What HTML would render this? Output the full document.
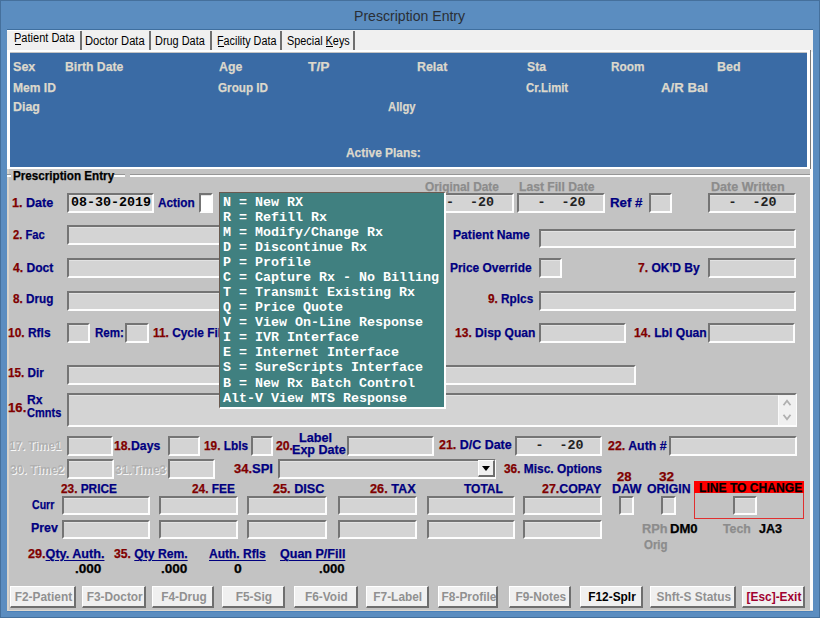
<!DOCTYPE html>
<html><head><meta charset="utf-8"><title>Prescription Entry</title><style>
html,body{margin:0;padding:0;}
body{width:820px;height:618px;overflow:hidden;position:relative;background:#5b8dc0;font-family:"Liberation Sans",sans-serif;}
.t{position:absolute;white-space:pre;line-height:1;transform-origin:0 0;}
.t.b{-webkit-text-stroke:0.25px currentColor;}
.m{position:absolute;white-space:pre;line-height:1;font-family:"Liberation Mono",monospace;font-weight:bold;}
.bx{position:absolute;border:2px solid;border-color:#747474 #fdfdfd #fdfdfd #747474;box-shadow:inset 0 1px 0 #e2e2e2;}
.r{position:absolute;}
.btn{position:absolute;box-sizing:border-box;background:#f0f0f0;border-style:solid;border-width:1px 2px 2px 1px;border-color:#fff #6e6e6e #6e6e6e #fff;font:bold 13px "Liberation Sans",sans-serif;text-align:center;line-height:18px;padding-top:1px;padding-left:2px;white-space:nowrap;overflow:hidden;}
.btn span{display:inline-block;margin:0 -20px;transform:scaleX(0.914);}
</style></head><body>

<div class="r" style="left:0;top:0;width:818px;height:616px;border:1px solid #45709c;"></div>
<div class="r" style="left:7px;top:29px;width:806px;height:582px;background:#c3c3c3;"></div>
<div class="r" style="left:810px;top:29px;width:3px;height:582px;background:#fbfbfb;"></div>
<div class="r" style="left:7px;top:610px;width:806px;height:1px;background:#ddd8d0;"></div>
<div class="r" style="left:7px;top:611px;width:806px;height:1px;background:#4a80b8;"></div>
<div class="r" style="left:7px;top:169px;width:2px;height:442px;background:#d8d4cc;"></div>
<div class="r" style="left:7px;top:29px;width:806px;height:23px;background:#f0f0f0;"></div>
<div class="r" style="left:7px;top:29px;width:806px;height:1px;background:#3f6f9f;"></div>
<div class="r" style="left:7px;top:50px;width:803px;height:2px;background:#fff;"></div>
<div class="r" style="left:7px;top:50px;width:3px;height:119px;background:#fff;"></div>
<div class="r" style="left:7px;top:167px;width:803px;height:2px;background:#fff;"></div>
<div class="r" style="left:807px;top:50px;width:3px;height:119px;background:#fff;"></div>
<div class="r" style="left:810px;top:50px;width:1px;height:119px;background:#7a7a7a;"></div>
<div class="r" style="left:10px;top:53px;width:797px;height:114px;background:#3a6ba5;"></div>
<div class="r" style="left:80px;top:31px;width:2px;height:19px;background:#6f6f6f;"></div>
<div class="r" style="left:148.5px;top:31px;width:2px;height:19px;background:#6f6f6f;"></div>
<div class="r" style="left:209.5px;top:31px;width:2px;height:19px;background:#6f6f6f;"></div>
<div class="r" style="left:280px;top:31px;width:2px;height:19px;background:#6f6f6f;"></div>
<div class="r" style="left:353px;top:31px;width:2px;height:19px;background:#6f6f6f;"></div>
<div class="r" style="left:7px;top:30px;width:74px;height:1px;background:#fff;"></div>
<div class="r" style="left:15px;top:44px;width:6px;height:1px;background:#000;"></div>
<div class="r" style="left:218px;top:46px;width:6px;height:1px;background:#000;"></div>
<div class="r" style="left:326px;top:46px;width:7px;height:1px;background:#000;"></div>
<div class="r" style="left:7px;top:174px;width:803px;height:1px;background:#969696;"></div>
<div class="r" style="left:7px;top:175px;width:803px;height:2px;background:#fdfdfd;"></div>
<div class="r" style="left:11px;top:170px;width:103px;height:12px;background:#c3c3c3;"></div>
<div class="r" style="left:125px;top:173px;width:5px;height:4px;background:#c3c3c3;"></div>
<div class="bx" style="left:67px;top:193px;width:83px;height:16px;background:#dadada;"></div>
<div class="m" style="left:71.0px;top:196.08px;font-size:13.33px;color:#000">08-30-2019</div>
<div class="bx" style="left:199px;top:193px;width:10px;height:16px;background:#fff;"></div>
<div class="bx" style="left:426px;top:193px;width:84px;height:16px;background:#d4d4d4;"></div>
<div class="m" style="left:430.0px;top:196.08px;font-size:13.33px;color:#222">  -  -20</div>
<div class="bx" style="left:517px;top:193px;width:84px;height:16px;background:#d4d4d4;"></div>
<div class="m" style="left:521.5px;top:196.08px;font-size:13.33px;color:#222">  -  -20</div>
<div class="bx" style="left:649px;top:193px;width:19px;height:16px;background:#d4d4d4;"></div>
<div class="bx" style="left:708px;top:193px;width:84px;height:16px;background:#d4d4d4;"></div>
<div class="m" style="left:712.5px;top:196.08px;font-size:13.33px;color:#222">  -  -20</div>
<div class="bx" style="left:67px;top:225px;width:369px;height:16px;background:#d4d4d4;"></div>
<div class="bx" style="left:539px;top:229px;width:253px;height:15px;background:#d4d4d4;"></div>
<div class="bx" style="left:67px;top:258px;width:369px;height:16px;background:#d4d4d4;"></div>
<div class="bx" style="left:539px;top:258px;width:19px;height:16px;background:#d4d4d4;"></div>
<div class="bx" style="left:708px;top:258px;width:84px;height:16px;background:#d4d4d4;"></div>
<div class="bx" style="left:67px;top:291px;width:369px;height:16px;background:#d4d4d4;"></div>
<div class="bx" style="left:539px;top:291px;width:253px;height:16px;background:#d4d4d4;"></div>
<div class="bx" style="left:67px;top:323px;width:19px;height:16px;background:#d4d4d4;"></div>
<div class="bx" style="left:125px;top:323px;width:20px;height:16px;background:#d4d4d4;"></div>
<div class="bx" style="left:539px;top:323px;width:83px;height:16px;background:#d4d4d4;"></div>
<div class="bx" style="left:708px;top:323px;width:83px;height:16px;background:#d4d4d4;"></div>
<div class="bx" style="left:67px;top:365px;width:565px;height:16px;background:#d4d4d4;"></div>
<div class="bx" style="left:67px;top:393px;width:726px;height:30px;background:#d4d4d4;"></div>
<div class="r" style="left:778px;top:395px;width:18px;height:30px;background:#f0f0f0;border-left:1px solid #fafafa;box-sizing:border-box;"></div>
<svg class="r" style="left:778px;top:395px" width="17" height="29"><path d="M5.5 10.3 L9 5.7 L12.5 10.3 M5.5 19.7 L9 24.3 L12.5 19.7" stroke="#b0b0b0" stroke-width="1.8" fill="none"/></svg>
<div class="bx" style="left:67px;top:436px;width:42px;height:16px;background:#d4d4d4;"></div>
<div class="bx" style="left:168px;top:436px;width:28px;height:16px;background:#d4d4d4;"></div>
<div class="bx" style="left:251px;top:436px;width:18px;height:16px;background:#d4d4d4;"></div>
<div class="bx" style="left:347px;top:436px;width:83px;height:16px;background:#d4d4d4;"></div>
<div class="bx" style="left:515px;top:436px;width:83px;height:16px;background:#d4d4d4;"></div>
<div class="m" style="left:519.5px;top:439.28px;font-size:13.33px;color:#222">  -  -20</div>
<div class="bx" style="left:669px;top:436px;width:124px;height:16px;background:#d4d4d4;"></div>
<div class="bx" style="left:67px;top:459px;width:43px;height:16px;background:#d4d4d4;"></div>
<div class="bx" style="left:168px;top:459px;width:43px;height:16px;background:#d4d4d4;"></div>
<div class="bx" style="left:278px;top:459px;width:214px;height:16px;background:#d4d4d4;"></div>
<div class="r" style="left:478px;top:460px;width:17px;height:17px;box-sizing:border-box;background:#f0f0f0;border-style:solid;border-width:1px 2px 2px 1px;border-color:#fff #6e6e6e #6e6e6e #fff;"></div>
<svg class="r" style="left:478px;top:460px" width="17" height="17"><path d="M4 6 L12 6 L8 11 Z" fill="#000"/></svg>
<div class="r" style="left:694px;top:481px;width:108px;height:36px;border:1px solid #e03030;"></div>
<div class="r" style="left:694px;top:481px;width:110px;height:12px;background:#ff0000;"></div>
<div class="bx" style="left:62px;top:496px;width:84px;height:15px;background:#d4d4d4;"></div>
<div class="bx" style="left:62px;top:520px;width:84px;height:15px;background:#d4d4d4;"></div>
<div class="bx" style="left:159px;top:496px;width:75px;height:15px;background:#d4d4d4;"></div>
<div class="bx" style="left:159px;top:520px;width:75px;height:15px;background:#d4d4d4;"></div>
<div class="bx" style="left:247px;top:496px;width:76px;height:15px;background:#d4d4d4;"></div>
<div class="bx" style="left:247px;top:520px;width:76px;height:15px;background:#d4d4d4;"></div>
<div class="bx" style="left:338px;top:496px;width:75px;height:15px;background:#d4d4d4;"></div>
<div class="bx" style="left:338px;top:520px;width:75px;height:15px;background:#d4d4d4;"></div>
<div class="bx" style="left:427px;top:496px;width:84px;height:15px;background:#d4d4d4;"></div>
<div class="bx" style="left:427px;top:520px;width:84px;height:15px;background:#d4d4d4;"></div>
<div class="bx" style="left:523px;top:496px;width:75px;height:15px;background:#d4d4d4;"></div>
<div class="bx" style="left:523px;top:520px;width:75px;height:15px;background:#d4d4d4;"></div>
<div class="bx" style="left:619px;top:496px;width:11px;height:15px;background:#d4d4d4;"></div>
<div class="bx" style="left:661px;top:496px;width:11px;height:15px;background:#d4d4d4;"></div>
<div class="bx" style="left:733px;top:496px;width:20px;height:15px;background:#d4d4d4;"></div>
<div class="t" style="left:353.86px;top:7.90px;font-size:15px;font-weight:normal;transform:scaleX(0.9385);"><span style="color:#2a2f36;">Prescription Entry</span></div>
<div class="t" style="left:13.58px;top:31.84px;font-size:12px;font-weight:normal;transform:scaleX(0.9192);"><span style="color:#000;">Patient Data</span></div>
<div class="t" style="left:84.82px;top:34.84px;font-size:12px;font-weight:normal;transform:scaleX(0.9325);"><span style="color:#000;">Doctor Data</span></div>
<div class="t" style="left:155.39px;top:34.84px;font-size:12px;font-weight:normal;transform:scaleX(0.9093);"><span style="color:#000;">Drug Data</span></div>
<div class="t" style="left:216.50px;top:34.84px;font-size:12px;font-weight:normal;transform:scaleX(0.9000);"><span style="color:#000;">Facility Data</span></div>
<div class="t" style="left:287.10px;top:34.84px;font-size:12px;font-weight:normal;transform:scaleX(0.9044);"><span style="color:#000;">Special Keys</span></div>
<div class="t b" style="left:12.78px;top:59.79px;font-size:13px;font-weight:bold;transform:scaleX(0.9659);"><span style="color:#dcd8cc;">Sex</span></div>
<div class="t b" style="left:64.81px;top:59.79px;font-size:13px;font-weight:bold;transform:scaleX(0.9385);"><span style="color:#dcd8cc;">Birth Date</span></div>
<div class="t b" style="left:219.25px;top:59.79px;font-size:13px;font-weight:bold;transform:scaleX(0.9479);"><span style="color:#dcd8cc;">Age</span></div>
<div class="t b" style="left:308.00px;top:59.79px;font-size:13px;font-weight:bold;transform:scaleX(1.0625);"><span style="color:#dcd8cc;">T/P</span></div>
<div class="t b" style="left:417.05px;top:59.79px;font-size:13px;font-weight:bold;transform:scaleX(0.9516);"><span style="color:#dcd8cc;">Relat</span></div>
<div class="t b" style="left:526.56px;top:59.79px;font-size:13px;font-weight:bold;transform:scaleX(0.9375);"><span style="color:#dcd8cc;">Sta</span></div>
<div class="t b" style="left:611.09px;top:59.79px;font-size:13px;font-weight:bold;transform:scaleX(0.9071);"><span style="color:#dcd8cc;">Room</span></div>
<div class="t b" style="left:716.54px;top:59.79px;font-size:13px;font-weight:bold;transform:scaleX(0.9565);"><span style="color:#dcd8cc;">Bed</span></div>
<div class="t b" style="left:12.82px;top:80.79px;font-size:13px;font-weight:bold;transform:scaleX(0.9278);"><span style="color:#dcd8cc;">Mem ID</span></div>
<div class="t b" style="left:218.00px;top:80.79px;font-size:13px;font-weight:bold;transform:scaleX(0.9000);"><span style="color:#dcd8cc;">Group ID</span></div>
<div class="t b" style="left:526.25px;top:80.79px;font-size:13px;font-weight:bold;transform:scaleX(0.8698);"><span style="color:#dcd8cc;">Cr.Limit</span></div>
<div class="t b" style="left:660.50px;top:80.79px;font-size:13px;font-weight:bold;transform:scaleX(1.0167);"><span style="color:#dcd8cc;">A/R Bal</span></div>
<div class="t b" style="left:12.80px;top:99.99px;font-size:13px;font-weight:bold;transform:scaleX(0.9537);"><span style="color:#dcd8cc;">Diag</span></div>
<div class="t b" style="left:388.00px;top:99.99px;font-size:13px;font-weight:bold;transform:scaleX(0.8672);"><span style="color:#dcd8cc;">Allgy</span></div>
<div class="t b" style="left:346.25px;top:146.49px;font-size:13px;font-weight:bold;transform:scaleX(0.9167);"><span style="color:#dcd8cc;">Active Plans:</span></div>
<div class="t b" style="left:12.90px;top:169.39px;font-size:13px;font-weight:bold;transform:scaleX(0.8973);"><span style="color:#000;">Prescription Entry</span></div>
<div class="t b" style="left:12.03px;top:195.69px;font-size:13px;font-weight:bold;transform:scaleX(0.9683);"><span style="color:#800000;">1. </span><span style="color:#000080;">Date</span></div>
<div class="t b" style="left:158.00px;top:195.69px;font-size:13px;font-weight:bold;transform:scaleX(0.9075);"><span style="color:#000080;">Action</span></div>
<div class="t b" style="left:425.00px;top:179.69px;font-size:13px;font-weight:bold;transform:scaleX(0.9136);"><span style="color:#8c8c8c;">Original Date</span></div>
<div class="t b" style="left:518.77px;top:179.69px;font-size:13px;font-weight:bold;transform:scaleX(0.9337);"><span style="color:#8c8c8c;">Last Fill Date</span></div>
<div class="t b" style="left:610.18px;top:195.69px;font-size:13px;font-weight:bold;transform:scaleX(1.0226);"><span style="color:#000080;">Ref #</span></div>
<div class="t b" style="left:711.43px;top:179.69px;font-size:13px;font-weight:bold;transform:scaleX(0.9667);"><span style="color:#8c8c8c;">Date Written</span></div>
<div class="t b" style="left:13.00px;top:227.99px;font-size:13px;font-weight:bold;transform:scaleX(0.8611);"><span style="color:#800000;">2. </span><span style="color:#000080;">Fac</span></div>
<div class="t b" style="left:453.47px;top:227.99px;font-size:13px;font-weight:bold;transform:scaleX(0.9333);"><span style="color:#000080;">Patient Name</span></div>
<div class="t b" style="left:13.00px;top:260.99px;font-size:13px;font-weight:bold;transform:scaleX(0.9302);"><span style="color:#800000;">4. </span><span style="color:#000080;">Doct</span></div>
<div class="t b" style="left:450.48px;top:260.99px;font-size:13px;font-weight:bold;transform:scaleX(0.9182);"><span style="color:#000080;">Price Override</span></div>
<div class="t b" style="left:638.30px;top:260.99px;font-size:13px;font-weight:bold;transform:scaleX(0.9254);"><span style="color:#800000;">7. </span><span style="color:#000080;">OK&#x27;D By</span></div>
<div class="t b" style="left:13.00px;top:292.49px;font-size:13px;font-weight:bold;transform:scaleX(0.9023);"><span style="color:#800000;">8. </span><span style="color:#000080;">Drug</span></div>
<div class="t b" style="left:487.80px;top:292.49px;font-size:13px;font-weight:bold;transform:scaleX(0.9061);"><span style="color:#800000;">9. </span><span style="color:#000080;">Rplcs</span></div>
<div class="t b" style="left:7.88px;top:325.99px;font-size:13px;font-weight:bold;transform:scaleX(0.9200);"><span style="color:#800000;">10. </span><span style="color:#000080;">Rfls</span></div>
<div class="t b" style="left:94.51px;top:325.99px;font-size:13px;font-weight:bold;transform:scaleX(0.8903);"><span style="color:#000080;">Rem:</span></div>
<div class="t b" style="left:152.69px;top:325.99px;font-size:13px;font-weight:bold;transform:scaleX(0.9140);"><span style="color:#800000;">11. </span><span style="color:#000080;">Cycle Fill</span></div>
<div class="t b" style="left:455.32px;top:325.99px;font-size:13px;font-weight:bold;transform:scaleX(0.9265);"><span style="color:#800000;">13. </span><span style="color:#000080;">Disp Quan</span></div>
<div class="t b" style="left:634.47px;top:325.99px;font-size:13px;font-weight:bold;transform:scaleX(0.9316);"><span style="color:#800000;">14. </span><span style="color:#000080;">Lbl Quan</span></div>
<div class="t b" style="left:7.90px;top:365.99px;font-size:13px;font-weight:bold;transform:scaleX(0.9026);"><span style="color:#800000;">15. </span><span style="color:#000080;">Dir</span></div>
<div class="t b" style="left:7.99px;top:400.59px;font-size:13px;font-weight:bold;transform:scaleX(1.0125);"><span style="color:#800000;">16.</span></div>
<div class="t b" style="left:26.87px;top:392.99px;font-size:13px;font-weight:bold;transform:scaleX(0.9313);"><span style="color:#000080;">Rx</span></div>
<div class="t b" style="left:26.90px;top:406.39px;font-size:13px;font-weight:bold;transform:scaleX(0.8475);"><span style="color:#000080;">Cmnts</span></div>
<div class="t b" style="left:9.11px;top:439.49px;font-size:13px;font-weight:bold;transform:scaleX(0.8879);text-shadow:1px 1px 0 #f8f8f8;-webkit-text-stroke:0;"><span style="color:#b0b0b0;">17. Time1</span></div>
<div class="t b" style="left:114.46px;top:439.49px;font-size:13px;font-weight:bold;transform:scaleX(0.9417);"><span style="color:#800000;">18.</span><span style="color:#000080;">Days</span></div>
<div class="t b" style="left:203.79px;top:439.49px;font-size:13px;font-weight:bold;transform:scaleX(0.9085);"><span style="color:#800000;">19. </span><span style="color:#000080;">Lbls</span></div>
<div class="t b" style="left:276.00px;top:438.99px;font-size:13px;font-weight:bold;transform:scaleX(0.9412);"><span style="color:#800000;">20.</span></div>
<div class="t b" style="left:299.02px;top:430.69px;font-size:13px;font-weight:bold;transform:scaleX(0.9750);"><span style="color:#000080;">Label</span></div>
<div class="t b" style="left:292.03px;top:442.79px;font-size:13px;font-weight:bold;transform:scaleX(0.9667);"><span style="color:#000080;">Exp Date</span></div>
<div class="t b" style="left:438.90px;top:438.29px;font-size:13px;font-weight:bold;transform:scaleX(0.9579);"><span style="color:#800000;">21. </span><span style="color:#000080;">D/C Date</span></div>
<div class="t b" style="left:607.90px;top:438.89px;font-size:13px;font-weight:bold;transform:scaleX(0.9516);"><span style="color:#800000;">22. </span><span style="color:#000080;">Auth #</span></div>
<div class="t b" style="left:9.58px;top:462.74px;font-size:13px;font-weight:bold;transform:scaleX(0.9181);text-shadow:1px 1px 0 #f8f8f8;-webkit-text-stroke:0;"><span style="color:#b0b0b0;">30. Time2</span></div>
<div class="t b" style="left:114.57px;top:462.74px;font-size:13px;font-weight:bold;transform:scaleX(0.9259);text-shadow:1px 1px 0 #f8f8f8;-webkit-text-stroke:0;"><span style="color:#b0b0b0;">31.Time3</span></div>
<div class="t b" style="left:234.10px;top:461.69px;font-size:13px;font-weight:bold;transform:scaleX(0.9973);"><span style="color:#800000;">34.</span><span style="color:#000080;">SPI</span></div>
<div class="t b" style="left:503.98px;top:461.69px;font-size:13px;font-weight:bold;transform:scaleX(0.9160);"><span style="color:#800000;">36. </span><span style="color:#000080;">Misc. Options</span></div>
<div class="t b" style="left:617.00px;top:469.79px;font-size:13px;font-weight:bold;transform:scaleX(1.0000);"><span style="color:#800000;">28</span></div>
<div class="t b" style="left:658.75px;top:469.79px;font-size:13px;font-weight:bold;transform:scaleX(1.0462);"><span style="color:#800000;">32</span></div>
<div class="t b" style="left:698.67px;top:481.49px;font-size:13px;font-weight:bold;transform:scaleX(0.9300);"><span style="color:#000;">LINE TO CHANGE</span></div>
<div class="t b" style="left:61.25px;top:481.79px;font-size:13px;font-weight:bold;transform:scaleX(0.9098);"><span style="color:#800000;">23. </span><span style="color:#000080;">PRICE</span></div>
<div class="t b" style="left:192.00px;top:481.79px;font-size:13px;font-weight:bold;transform:scaleX(0.9149);"><span style="color:#800000;">24. </span><span style="color:#000080;">FEE</span></div>
<div class="t b" style="left:273.00px;top:481.79px;font-size:13px;font-weight:bold;transform:scaleX(0.9760);"><span style="color:#800000;">25. </span><span style="color:#000080;">DISC</span></div>
<div class="t b" style="left:370.00px;top:481.79px;font-size:13px;font-weight:bold;transform:scaleX(0.9783);"><span style="color:#800000;">26. </span><span style="color:#000080;">TAX</span></div>
<div class="t b" style="left:463.75px;top:481.79px;font-size:13px;font-weight:bold;transform:scaleX(0.9226);"><span style="color:#000080;">TOTAL</span></div>
<div class="t b" style="left:541.80px;top:481.79px;font-size:13px;font-weight:bold;transform:scaleX(0.9516);"><span style="color:#800000;">27.</span><span style="color:#000080;">COPAY</span></div>
<div class="t b" style="left:612.12px;top:481.59px;font-size:13px;font-weight:bold;transform:scaleX(0.9759);"><span style="color:#000080;">DAW</span></div>
<div class="t b" style="left:646.70px;top:481.59px;font-size:13px;font-weight:bold;transform:scaleX(0.9422);"><span style="color:#000080;">ORIGIN</span></div>
<div class="t b" style="left:31.75px;top:497.74px;font-size:13px;font-weight:bold;transform:scaleX(0.8125);"><span style="color:#000080;">Curr</span></div>
<div class="t b" style="left:30.80px;top:521.49px;font-size:13px;font-weight:bold;transform:scaleX(0.9537);"><span style="color:#000080;">Prev</span></div>
<div class="t b" style="left:642.32px;top:521.99px;font-size:13px;font-weight:bold;transform:scaleX(0.9833);"><span style="color:#8c8c8c;">RPh</span></div>
<div class="t b" style="left:670.29px;top:521.99px;font-size:13px;font-weight:bold;transform:scaleX(1.0077);"><span style="color:#000;">DM0</span></div>
<div class="t b" style="left:722.70px;top:521.99px;font-size:13px;font-weight:bold;transform:scaleX(0.9483);"><span style="color:#8c8c8c;">Tech</span></div>
<div class="t b" style="left:758.60px;top:521.99px;font-size:13px;font-weight:bold;transform:scaleX(0.9696);"><span style="color:#000;">JA3</span></div>
<div class="t b" style="left:644.00px;top:538.49px;font-size:13px;font-weight:bold;transform:scaleX(0.8808);"><span style="color:#8c8c8c;">Orig</span></div>
<div class="t b" style="left:28.00px;top:546.99px;font-size:13px;font-weight:bold;transform:scaleX(0.9712);"><span style="color:#800000;">29.</span><span style="color:#000080;text-decoration:underline;text-underline-offset:2px;">Qty. Auth.</span></div>
<div class="t b" style="left:114.06px;top:546.99px;font-size:13px;font-weight:bold;transform:scaleX(0.9351);"><span style="color:#800000;">35. </span><span style="color:#000080;text-decoration:underline;text-underline-offset:2px;">Qty Rem.</span></div>
<div class="t b" style="left:209.30px;top:546.99px;font-size:13px;font-weight:bold;transform:scaleX(0.9246);"><span style="color:#000080;text-decoration:underline;text-underline-offset:2px;">Auth. Rfls</span></div>
<div class="t b" style="left:279.80px;top:546.99px;font-size:13px;font-weight:bold;transform:scaleX(0.9627);"><span style="color:#000080;text-decoration:underline;text-underline-offset:2px;">Quan P/Fill</span></div>
<div class="t b" style="left:75.21px;top:561.99px;font-size:13px;font-weight:bold;transform:scaleX(1.0417);"><span style="color:#000;">.000</span></div>
<div class="t b" style="left:161.46px;top:561.99px;font-size:13px;font-weight:bold;transform:scaleX(1.0417);"><span style="color:#000;">.000</span></div>
<div class="t b" style="left:233.90px;top:561.99px;font-size:13px;font-weight:bold;transform:scaleX(1.0714);"><span style="color:#000;">0</span></div>
<div class="t b" style="left:318.99px;top:561.99px;font-size:13px;font-weight:bold;transform:scaleX(1.0125);"><span style="color:#000;">.000</span></div>
<div class="r" style="left:219px;top:192px;width:227px;height:217px;box-sizing:border-box;background:#408080;border-style:solid;border-width:1px 2px 2px 1px;border-color:#6a5a50 #fff #fff #6a5a50;"></div>
<div class="m" style="left:223px;top:195.68px;font-size:13.33px;color:#fff">N = New RX</div>
<div class="m" style="left:223px;top:210.75px;font-size:13.33px;color:#fff">R = Refill Rx</div>
<div class="m" style="left:223px;top:225.82px;font-size:13.33px;color:#fff">M = Modify/Change Rx</div>
<div class="m" style="left:223px;top:240.89px;font-size:13.33px;color:#fff">D = Discontinue Rx</div>
<div class="m" style="left:223px;top:255.96px;font-size:13.33px;color:#fff">P = Profile</div>
<div class="m" style="left:223px;top:271.03px;font-size:13.33px;color:#fff">C = Capture Rx - No Billing</div>
<div class="m" style="left:223px;top:286.10px;font-size:13.33px;color:#fff">T = Transmit Existing Rx</div>
<div class="m" style="left:223px;top:301.17px;font-size:13.33px;color:#fff">Q = Price Quote</div>
<div class="m" style="left:223px;top:316.24px;font-size:13.33px;color:#fff">V = View On-Line Response</div>
<div class="m" style="left:223px;top:331.31px;font-size:13.33px;color:#fff">I = IVR Interface</div>
<div class="m" style="left:223px;top:346.38px;font-size:13.33px;color:#fff">E = Internet Interface</div>
<div class="m" style="left:223px;top:361.45px;font-size:13.33px;color:#fff">S = SureScripts Interface</div>
<div class="m" style="left:223px;top:376.52px;font-size:13.33px;color:#fff">B = New Rx Batch Control</div>
<div class="m" style="left:223px;top:391.59px;font-size:13.33px;color:#fff">Alt-V View MTS Response</div>
<div class="btn" style="left:10px;top:586px;width:66px;height:22px;color:#909090"><span>F2-Patient</span></div>
<div class="btn" style="left:82px;top:586px;width:64px;height:22px;color:#909090"><span>F3-Doctor</span></div>
<div class="btn" style="left:152px;top:586px;width:62px;height:22px;color:#909090"><span>F4-Drug</span></div>
<div class="btn" style="left:222px;top:586px;width:63px;height:22px;color:#909090"><span>F5-Sig</span></div>
<div class="btn" style="left:294px;top:586px;width:64px;height:22px;color:#909090"><span>F6-Void</span></div>
<div class="btn" style="left:366px;top:586px;width:63px;height:22px;color:#909090"><span>F7-Label</span></div>
<div class="btn" style="left:438px;top:586px;width:60px;height:22px;color:#909090"><span>F8-Profile</span></div>
<div class="btn" style="left:509px;top:586px;width:62px;height:22px;color:#909090"><span>F9-Notes</span></div>
<div class="btn" style="left:580px;top:586px;width:63px;height:22px;color:#000"><span>F12-Splr</span></div>
<div class="btn" style="left:650px;top:586px;width:86px;height:22px;color:#909090"><span>Shft-S Status</span></div>
<div class="btn" style="left:742px;top:586px;width:63px;height:22px;color:#a00030"><span>[Esc]-Exit</span></div>
</body></html>
